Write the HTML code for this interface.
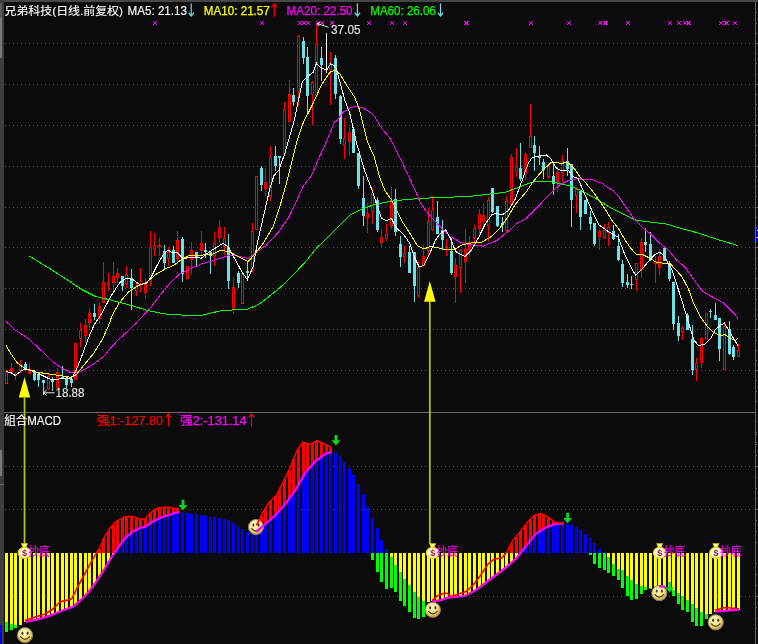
<!DOCTYPE html>
<html lang="zh"><head><meta charset="utf-8"><title>兄弟科技 日线</title>
<style>html,body{margin:0;padding:0;background:#0b0b0b;}body{width:758px;height:644px;overflow:hidden;font-family:"Liberation Sans","Noto Sans CJK SC",sans-serif;}svg text{white-space:pre;}</style>
</head><body>
<svg width="758" height="644" viewBox="0 0 758 644" style="display:block;will-change:transform">
<rect width="758" height="644" fill="#0b0b0b"/>
<g shape-rendering="crispEdges">
<rect x="0" y="0" width="758" height="2" fill="#474747"/>
<rect x="0" y="0" width="4" height="644" fill="#3d3d3d"/>
<rect x="0" y="3" width="2" height="15" fill="#5c5c5c"/>
<rect x="0" y="18" width="2" height="40" fill="#7a7a7a"/>
<rect x="0" y="450" width="2" height="26" fill="#7a7a7a"/>
<rect x="0" y="484" width="4" height="1" fill="#6a6a6a"/>
<rect x="0" y="625" width="2" height="19" fill="#0000ff"/>
<rect x="755" y="2" width="1" height="644" fill="#666"/>
<rect x="4" y="412" width="752" height="1" fill="#6a6a6a"/>
<rect x="756" y="227" width="2" height="15" fill="#0000ee"/>
<rect x="757" y="230" width="1" height="1" fill="#fff"/><rect x="757" y="237" width="1" height="1" fill="#fff"/>
<line x1="5" y1="43.5" x2="755" y2="43.5" stroke="#505050" stroke-width="1" stroke-dasharray="1 3"/>
<rect x="756" y="43" width="2" height="1" fill="#666"/>
<line x1="5" y1="84.5" x2="755" y2="84.5" stroke="#505050" stroke-width="1" stroke-dasharray="1 3"/>
<rect x="756" y="84" width="2" height="1" fill="#666"/>
<line x1="5" y1="125.5" x2="755" y2="125.5" stroke="#505050" stroke-width="1" stroke-dasharray="1 3"/>
<rect x="756" y="125" width="2" height="1" fill="#666"/>
<line x1="5" y1="166.5" x2="755" y2="166.5" stroke="#505050" stroke-width="1" stroke-dasharray="1 3"/>
<rect x="756" y="166" width="2" height="1" fill="#666"/>
<line x1="5" y1="207.5" x2="755" y2="207.5" stroke="#505050" stroke-width="1" stroke-dasharray="1 3"/>
<rect x="756" y="207" width="2" height="1" fill="#666"/>
<line x1="5" y1="247.5" x2="755" y2="247.5" stroke="#505050" stroke-width="1" stroke-dasharray="1 3"/>
<rect x="756" y="247" width="2" height="1" fill="#666"/>
<line x1="5" y1="288.5" x2="755" y2="288.5" stroke="#505050" stroke-width="1" stroke-dasharray="1 3"/>
<rect x="756" y="288" width="2" height="1" fill="#666"/>
<line x1="5" y1="329.5" x2="755" y2="329.5" stroke="#505050" stroke-width="1" stroke-dasharray="1 3"/>
<rect x="756" y="329" width="2" height="1" fill="#666"/>
<line x1="5" y1="370.5" x2="755" y2="370.5" stroke="#505050" stroke-width="1" stroke-dasharray="1 3"/>
<rect x="756" y="370" width="2" height="1" fill="#666"/>
<line x1="5" y1="466.5" x2="755" y2="466.5" stroke="#505050" stroke-width="1" stroke-dasharray="1 3"/>
<rect x="756" y="466" width="2" height="1" fill="#666"/>
<line x1="5" y1="509.5" x2="755" y2="509.5" stroke="#505050" stroke-width="1" stroke-dasharray="1 3"/>
<rect x="756" y="509" width="2" height="1" fill="#666"/>
<line x1="5" y1="596.5" x2="755" y2="596.5" stroke="#505050" stroke-width="1" stroke-dasharray="1 3"/>
<rect x="756" y="596" width="2" height="1" fill="#666"/>
<rect x="756" y="12" width="1" height="1" fill="#666"/>
<rect x="756" y="23" width="1" height="1" fill="#666"/>
<rect x="756" y="33" width="1" height="1" fill="#666"/>
<rect x="756" y="53" width="1" height="1" fill="#666"/>
<rect x="756" y="63" width="1" height="1" fill="#666"/>
<rect x="756" y="74" width="1" height="1" fill="#666"/>
<rect x="756" y="94" width="1" height="1" fill="#666"/>
<rect x="756" y="104" width="1" height="1" fill="#666"/>
<rect x="756" y="115" width="1" height="1" fill="#666"/>
<rect x="756" y="135" width="1" height="1" fill="#666"/>
<rect x="756" y="145" width="1" height="1" fill="#666"/>
<rect x="756" y="155" width="1" height="1" fill="#666"/>
<rect x="756" y="176" width="1" height="1" fill="#666"/>
<rect x="756" y="186" width="1" height="1" fill="#666"/>
<rect x="756" y="196" width="1" height="1" fill="#666"/>
<rect x="756" y="217" width="1" height="1" fill="#666"/>
<rect x="756" y="227" width="1" height="1" fill="#666"/>
<rect x="756" y="237" width="1" height="1" fill="#666"/>
<rect x="756" y="258" width="1" height="1" fill="#666"/>
<rect x="756" y="268" width="1" height="1" fill="#666"/>
<rect x="756" y="278" width="1" height="1" fill="#666"/>
<rect x="756" y="299" width="1" height="1" fill="#666"/>
<rect x="756" y="309" width="1" height="1" fill="#666"/>
<rect x="756" y="319" width="1" height="1" fill="#666"/>
<rect x="756" y="340" width="1" height="1" fill="#666"/>
<rect x="756" y="350" width="1" height="1" fill="#666"/>
<rect x="756" y="360" width="1" height="1" fill="#666"/>
<rect x="756" y="380" width="1" height="1" fill="#666"/>
<rect x="756" y="391" width="1" height="1" fill="#666"/>
<rect x="756" y="401" width="1" height="1" fill="#666"/>
<rect x="756" y="421" width="1" height="1" fill="#666"/>
<rect x="756" y="432" width="1" height="1" fill="#666"/>
<rect x="756" y="442" width="1" height="1" fill="#666"/>
<rect x="756" y="434" width="1" height="1" fill="#666"/>
<rect x="756" y="444" width="1" height="1" fill="#666"/>
<rect x="756" y="455" width="1" height="1" fill="#666"/>
<rect x="756" y="477" width="1" height="1" fill="#666"/>
<rect x="756" y="488" width="1" height="1" fill="#666"/>
<rect x="756" y="498" width="1" height="1" fill="#666"/>
<rect x="756" y="520" width="1" height="1" fill="#666"/>
<rect x="756" y="531" width="1" height="1" fill="#666"/>
<rect x="756" y="542" width="1" height="1" fill="#666"/>
<rect x="756" y="563" width="1" height="1" fill="#666"/>
<rect x="756" y="574" width="1" height="1" fill="#666"/>
<rect x="756" y="585" width="1" height="1" fill="#666"/>
<rect x="756" y="607" width="1" height="1" fill="#666"/>
<rect x="756" y="618" width="1" height="1" fill="#666"/>
<rect x="756" y="628" width="1" height="1" fill="#666"/>
</g>
<g shape-rendering="crispEdges">
<rect x="6" y="370" width="1" height="2" fill="#ff0000"/>
<rect x="5" y="372" width="3" height="12" fill="#ff0000"/>
<rect x="6" y="373" width="1" height="10" fill="#0b0b0b"/>
<rect x="11" y="363" width="1" height="5" fill="#ff0000"/>
<rect x="11" y="372" width="1" height="1" fill="#ff0000"/>
<rect x="10" y="368" width="3" height="4" fill="#ff0000"/>
<rect x="11" y="369" width="1" height="2" fill="#0b0b0b"/>
<rect x="15" y="372" width="1" height="3" fill="#ff0000"/>
<rect x="15" y="376" width="1" height="4" fill="#ff0000"/>
<rect x="14" y="375" width="3" height="1" fill="#ff0000"/>
<rect x="20" y="360" width="1" height="4" fill="#ff0000"/>
<rect x="20" y="371" width="1" height="2" fill="#ff0000"/>
<rect x="19" y="364" width="3" height="7" fill="#ff0000"/>
<rect x="20" y="365" width="1" height="5" fill="#0b0b0b"/>
<rect x="25" y="362" width="1" height="9" fill="#6ce2e8"/>
<rect x="24" y="364" width="3" height="6" fill="#6ce2e8"/>
<rect x="29" y="363" width="1" height="6" fill="#ff0000"/>
<rect x="28" y="369" width="3" height="5" fill="#ff0000"/>
<rect x="29" y="370" width="1" height="3" fill="#0b0b0b"/>
<rect x="34" y="371" width="1" height="10" fill="#6ce2e8"/>
<rect x="33" y="372" width="3" height="8" fill="#6ce2e8"/>
<rect x="38" y="374" width="1" height="13" fill="#6ce2e8"/>
<rect x="37" y="374" width="3" height="6" fill="#6ce2e8"/>
<rect x="43" y="380" width="1" height="15" fill="#6ce2e8"/>
<rect x="42" y="380" width="3" height="3" fill="#6ce2e8"/>
<rect x="48" y="373" width="1" height="3" fill="#ff0000"/>
<rect x="48" y="389" width="1" height="1" fill="#ff0000"/>
<rect x="47" y="376" width="3" height="13" fill="#ff0000"/>
<rect x="48" y="377" width="1" height="11" fill="#0b0b0b"/>
<rect x="52" y="377" width="1" height="14" fill="#6ce2e8"/>
<rect x="51" y="379" width="3" height="3" fill="#6ce2e8"/>
<rect x="57" y="368" width="1" height="4" fill="#ff0000"/>
<rect x="56" y="372" width="3" height="16" fill="#ff0000"/>
<rect x="57" y="373" width="1" height="14" fill="#0b0b0b"/>
<rect x="62" y="366" width="1" height="13" fill="#6ce2e8"/>
<rect x="61" y="377" width="3" height="2" fill="#6ce2e8"/>
<rect x="66" y="377" width="1" height="11" fill="#6ce2e8"/>
<rect x="65" y="378" width="3" height="7" fill="#6ce2e8"/>
<rect x="71" y="378" width="1" height="9" fill="#6ce2e8"/>
<rect x="70" y="379" width="3" height="4" fill="#6ce2e8"/>
<rect x="74" y="343" width="3" height="37" fill="#ff0000"/>
<rect x="75" y="344" width="1" height="35" fill="#0b0b0b"/>
<rect x="80" y="323" width="1" height="7" fill="#ff0000"/>
<rect x="80" y="339" width="1" height="8" fill="#ff0000"/>
<rect x="79" y="330" width="3" height="9" fill="#ff0000"/>
<rect x="80" y="331" width="1" height="7" fill="#0b0b0b"/>
<rect x="85" y="319" width="1" height="6" fill="#ff0000"/>
<rect x="85" y="336" width="1" height="6" fill="#ff0000"/>
<rect x="84" y="325" width="3" height="11" fill="#ff0000"/>
<rect x="85" y="326" width="1" height="9" fill="#0b0b0b"/>
<rect x="89" y="308" width="1" height="5" fill="#ff0000"/>
<rect x="89" y="323" width="1" height="6" fill="#ff0000"/>
<rect x="88" y="313" width="3" height="10" fill="#ff0000"/>
<rect x="89" y="314" width="1" height="8" fill="#0b0b0b"/>
<rect x="94" y="304" width="1" height="16" fill="#6ce2e8"/>
<rect x="93" y="313" width="3" height="4" fill="#6ce2e8"/>
<rect x="99" y="302" width="1" height="4" fill="#ff0000"/>
<rect x="99" y="319" width="1" height="5" fill="#ff0000"/>
<rect x="98" y="306" width="3" height="13" fill="#ff0000"/>
<rect x="99" y="307" width="1" height="11" fill="#0b0b0b"/>
<rect x="103" y="262" width="1" height="20" fill="#ff0000"/>
<rect x="102" y="282" width="3" height="21" fill="#ff0000"/>
<rect x="103" y="283" width="1" height="19" fill="#0b0b0b"/>
<rect x="108" y="273" width="1" height="9" fill="#ff0000"/>
<rect x="108" y="285" width="1" height="6" fill="#ff0000"/>
<rect x="107" y="282" width="3" height="3" fill="#ff0000"/>
<rect x="108" y="283" width="1" height="1" fill="#0b0b0b"/>
<rect x="113" y="262" width="1" height="14" fill="#ff0000"/>
<rect x="113" y="283" width="1" height="8" fill="#ff0000"/>
<rect x="112" y="276" width="3" height="7" fill="#ff0000"/>
<rect x="113" y="277" width="1" height="5" fill="#0b0b0b"/>
<rect x="117" y="268" width="1" height="5" fill="#ff0000"/>
<rect x="117" y="278" width="1" height="5" fill="#ff0000"/>
<rect x="116" y="273" width="3" height="5" fill="#ff0000"/>
<rect x="117" y="274" width="1" height="3" fill="#0b0b0b"/>
<rect x="122" y="276" width="1" height="15" fill="#6ce2e8"/>
<rect x="121" y="276" width="3" height="10" fill="#6ce2e8"/>
<rect x="126" y="266" width="1" height="8" fill="#ff0000"/>
<rect x="126" y="284" width="1" height="4" fill="#ff0000"/>
<rect x="125" y="274" width="3" height="10" fill="#ff0000"/>
<rect x="126" y="275" width="1" height="8" fill="#0b0b0b"/>
<rect x="131" y="269" width="1" height="41" fill="#6ce2e8"/>
<rect x="130" y="278" width="3" height="10" fill="#6ce2e8"/>
<rect x="136" y="283" width="1" height="3" fill="#ff0000"/>
<rect x="136" y="291" width="1" height="5" fill="#ff0000"/>
<rect x="135" y="286" width="3" height="5" fill="#ff0000"/>
<rect x="136" y="287" width="1" height="3" fill="#0b0b0b"/>
<rect x="140" y="268" width="1" height="23" fill="#ff0000"/>
<rect x="139" y="291" width="3" height="1" fill="#ff0000"/>
<rect x="145" y="278" width="1" height="6" fill="#ff0000"/>
<rect x="145" y="293" width="1" height="6" fill="#ff0000"/>
<rect x="144" y="284" width="3" height="9" fill="#ff0000"/>
<rect x="145" y="285" width="1" height="7" fill="#0b0b0b"/>
<rect x="150" y="231" width="1" height="16" fill="#ff0000"/>
<rect x="150" y="282" width="1" height="4" fill="#ff0000"/>
<rect x="149" y="247" width="3" height="35" fill="#ff0000"/>
<rect x="150" y="248" width="1" height="33" fill="#0b0b0b"/>
<rect x="154" y="233" width="1" height="13" fill="#ff0000"/>
<rect x="154" y="250" width="1" height="6" fill="#ff0000"/>
<rect x="153" y="246" width="3" height="4" fill="#ff0000"/>
<rect x="154" y="247" width="1" height="2" fill="#0b0b0b"/>
<rect x="159" y="238" width="1" height="7" fill="#ff0000"/>
<rect x="159" y="247" width="1" height="9" fill="#ff0000"/>
<rect x="158" y="245" width="3" height="2" fill="#ff0000"/>
<rect x="164" y="245" width="1" height="24" fill="#6ce2e8"/>
<rect x="163" y="251" width="3" height="12" fill="#6ce2e8"/>
<rect x="168" y="247" width="1" height="5" fill="#ff0000"/>
<rect x="168" y="259" width="1" height="7" fill="#ff0000"/>
<rect x="167" y="252" width="3" height="7" fill="#ff0000"/>
<rect x="168" y="253" width="1" height="5" fill="#0b0b0b"/>
<rect x="173" y="246" width="1" height="17" fill="#6ce2e8"/>
<rect x="172" y="250" width="3" height="13" fill="#6ce2e8"/>
<rect x="177" y="231" width="1" height="9" fill="#ff0000"/>
<rect x="177" y="259" width="1" height="6" fill="#ff0000"/>
<rect x="176" y="240" width="3" height="19" fill="#ff0000"/>
<rect x="177" y="241" width="1" height="17" fill="#0b0b0b"/>
<rect x="182" y="237" width="1" height="45" fill="#6ce2e8"/>
<rect x="181" y="239" width="3" height="35" fill="#6ce2e8"/>
<rect x="187" y="279" width="1" height="1" fill="#ff0000"/>
<rect x="186" y="266" width="3" height="13" fill="#ff0000"/>
<rect x="187" y="267" width="1" height="11" fill="#0b0b0b"/>
<rect x="191" y="242" width="1" height="8" fill="#ff0000"/>
<rect x="191" y="260" width="1" height="15" fill="#ff0000"/>
<rect x="190" y="250" width="3" height="10" fill="#ff0000"/>
<rect x="191" y="251" width="1" height="8" fill="#0b0b0b"/>
<rect x="196" y="252" width="1" height="15" fill="#6ce2e8"/>
<rect x="195" y="252" width="3" height="6" fill="#6ce2e8"/>
<rect x="201" y="231" width="1" height="12" fill="#ff0000"/>
<rect x="201" y="251" width="1" height="5" fill="#ff0000"/>
<rect x="200" y="243" width="3" height="8" fill="#ff0000"/>
<rect x="201" y="244" width="1" height="6" fill="#0b0b0b"/>
<rect x="205" y="243" width="1" height="15" fill="#6ce2e8"/>
<rect x="204" y="250" width="3" height="2" fill="#6ce2e8"/>
<rect x="210" y="251" width="1" height="23" fill="#6ce2e8"/>
<rect x="209" y="252" width="3" height="4" fill="#6ce2e8"/>
<rect x="214" y="232" width="1" height="11" fill="#ff0000"/>
<rect x="214" y="256" width="1" height="10" fill="#ff0000"/>
<rect x="213" y="243" width="3" height="13" fill="#ff0000"/>
<rect x="214" y="244" width="1" height="11" fill="#0b0b0b"/>
<rect x="219" y="220" width="1" height="7" fill="#ff0000"/>
<rect x="219" y="238" width="1" height="5" fill="#ff0000"/>
<rect x="218" y="227" width="3" height="11" fill="#ff0000"/>
<rect x="219" y="228" width="1" height="9" fill="#0b0b0b"/>
<rect x="224" y="227" width="1" height="11" fill="#ff0000"/>
<rect x="224" y="247" width="1" height="8" fill="#ff0000"/>
<rect x="223" y="238" width="3" height="9" fill="#ff0000"/>
<rect x="224" y="239" width="1" height="7" fill="#0b0b0b"/>
<rect x="228" y="234" width="1" height="55" fill="#6ce2e8"/>
<rect x="227" y="247" width="3" height="34" fill="#6ce2e8"/>
<rect x="233" y="277" width="1" height="10" fill="#ff0000"/>
<rect x="233" y="310" width="1" height="4" fill="#ff0000"/>
<rect x="232" y="287" width="3" height="23" fill="#ff0000"/>
<rect x="233" y="288" width="1" height="21" fill="#0b0b0b"/>
<rect x="238" y="271" width="1" height="17" fill="#6ce2e8"/>
<rect x="237" y="273" width="3" height="10" fill="#6ce2e8"/>
<rect x="241" y="274" width="3" height="30" fill="#ff0000"/>
<rect x="242" y="275" width="1" height="28" fill="#0b0b0b"/>
<rect x="247" y="262" width="1" height="16" fill="#6ce2e8"/>
<rect x="246" y="271" width="3" height="2" fill="#6ce2e8"/>
<rect x="252" y="223" width="1" height="8" fill="#ff0000"/>
<rect x="252" y="270" width="1" height="3" fill="#ff0000"/>
<rect x="251" y="231" width="3" height="39" fill="#ff0000"/>
<rect x="252" y="232" width="1" height="37" fill="#0b0b0b"/>
<rect x="255" y="176" width="3" height="54" fill="#ff0000"/>
<rect x="256" y="177" width="1" height="52" fill="#0b0b0b"/>
<rect x="261" y="166" width="1" height="25" fill="#6ce2e8"/>
<rect x="260" y="168" width="3" height="17" fill="#6ce2e8"/>
<rect x="265" y="168" width="1" height="14" fill="#ff0000"/>
<rect x="265" y="189" width="1" height="7" fill="#ff0000"/>
<rect x="264" y="182" width="3" height="7" fill="#ff0000"/>
<rect x="265" y="183" width="1" height="5" fill="#0b0b0b"/>
<rect x="270" y="146" width="1" height="11" fill="#ff0000"/>
<rect x="270" y="197" width="1" height="4" fill="#ff0000"/>
<rect x="269" y="157" width="3" height="40" fill="#ff0000"/>
<rect x="270" y="158" width="1" height="38" fill="#0b0b0b"/>
<rect x="275" y="146" width="1" height="25" fill="#6ce2e8"/>
<rect x="274" y="156" width="3" height="10" fill="#6ce2e8"/>
<rect x="279" y="156" width="1" height="28" fill="#6ce2e8"/>
<rect x="278" y="156" width="3" height="2" fill="#6ce2e8"/>
<rect x="284" y="102" width="1" height="7" fill="#ff0000"/>
<rect x="284" y="154" width="1" height="1" fill="#ff0000"/>
<rect x="283" y="109" width="3" height="45" fill="#ff0000"/>
<rect x="284" y="110" width="1" height="43" fill="#0b0b0b"/>
<rect x="289" y="80" width="1" height="14" fill="#ff0000"/>
<rect x="288" y="94" width="3" height="28" fill="#ff0000"/>
<rect x="289" y="95" width="1" height="26" fill="#0b0b0b"/>
<rect x="293" y="88" width="1" height="18" fill="#6ce2e8"/>
<rect x="292" y="95" width="3" height="7" fill="#6ce2e8"/>
<rect x="298" y="35" width="1" height="1" fill="#ff0000"/>
<rect x="298" y="92" width="1" height="14" fill="#ff0000"/>
<rect x="297" y="36" width="3" height="56" fill="#ff0000"/>
<rect x="298" y="37" width="1" height="54" fill="#0b0b0b"/>
<rect x="303" y="37" width="1" height="27" fill="#6ce2e8"/>
<rect x="302" y="41" width="3" height="17" fill="#6ce2e8"/>
<rect x="307" y="47" width="1" height="67" fill="#6ce2e8"/>
<rect x="306" y="57" width="3" height="39" fill="#6ce2e8"/>
<rect x="312" y="81" width="1" height="1" fill="#ff0000"/>
<rect x="312" y="95" width="1" height="30" fill="#ff0000"/>
<rect x="311" y="82" width="3" height="13" fill="#ff0000"/>
<rect x="312" y="83" width="1" height="11" fill="#0b0b0b"/>
<rect x="316" y="23" width="1" height="21" fill="#ff0000"/>
<rect x="316" y="96" width="1" height="1" fill="#ff0000"/>
<rect x="315" y="44" width="3" height="52" fill="#ff0000"/>
<rect x="316" y="45" width="1" height="50" fill="#0b0b0b"/>
<rect x="321" y="47" width="1" height="34" fill="#6ce2e8"/>
<rect x="320" y="58" width="3" height="7" fill="#6ce2e8"/>
<rect x="326" y="33" width="1" height="40" fill="#fff"/>
<rect x="325" y="69" width="3" height="1" fill="#fff"/>
<rect x="330" y="52" width="1" height="11" fill="#ff0000"/>
<rect x="330" y="70" width="1" height="35" fill="#ff0000"/>
<rect x="329" y="63" width="3" height="7" fill="#ff0000"/>
<rect x="330" y="64" width="1" height="5" fill="#0b0b0b"/>
<rect x="335" y="55" width="1" height="44" fill="#6ce2e8"/>
<rect x="334" y="58" width="3" height="36" fill="#6ce2e8"/>
<rect x="340" y="95" width="1" height="49" fill="#6ce2e8"/>
<rect x="339" y="96" width="3" height="43" fill="#6ce2e8"/>
<rect x="344" y="118" width="1" height="20" fill="#ff0000"/>
<rect x="344" y="146" width="1" height="13" fill="#ff0000"/>
<rect x="343" y="138" width="3" height="8" fill="#ff0000"/>
<rect x="344" y="139" width="1" height="6" fill="#0b0b0b"/>
<rect x="349" y="127" width="1" height="5" fill="#ff0000"/>
<rect x="349" y="142" width="1" height="14" fill="#ff0000"/>
<rect x="348" y="132" width="3" height="10" fill="#ff0000"/>
<rect x="349" y="133" width="1" height="8" fill="#0b0b0b"/>
<rect x="353" y="129" width="1" height="24" fill="#6ce2e8"/>
<rect x="352" y="129" width="3" height="24" fill="#6ce2e8"/>
<rect x="358" y="153" width="1" height="36" fill="#6ce2e8"/>
<rect x="357" y="153" width="3" height="33" fill="#6ce2e8"/>
<rect x="363" y="176" width="1" height="50" fill="#6ce2e8"/>
<rect x="362" y="198" width="3" height="18" fill="#6ce2e8"/>
<rect x="367" y="203" width="1" height="10" fill="#ff0000"/>
<rect x="367" y="218" width="1" height="15" fill="#ff0000"/>
<rect x="366" y="213" width="3" height="5" fill="#ff0000"/>
<rect x="367" y="214" width="1" height="3" fill="#0b0b0b"/>
<rect x="372" y="188" width="1" height="5" fill="#ff0000"/>
<rect x="372" y="212" width="1" height="12" fill="#ff0000"/>
<rect x="371" y="193" width="3" height="19" fill="#ff0000"/>
<rect x="372" y="194" width="1" height="17" fill="#0b0b0b"/>
<rect x="377" y="197" width="1" height="35" fill="#6ce2e8"/>
<rect x="376" y="200" width="3" height="30" fill="#6ce2e8"/>
<rect x="381" y="229" width="1" height="8" fill="#ff0000"/>
<rect x="381" y="243" width="1" height="4" fill="#ff0000"/>
<rect x="380" y="237" width="3" height="6" fill="#ff0000"/>
<rect x="381" y="238" width="1" height="4" fill="#0b0b0b"/>
<rect x="386" y="224" width="1" height="10" fill="#ff0000"/>
<rect x="386" y="239" width="1" height="2" fill="#ff0000"/>
<rect x="385" y="234" width="3" height="5" fill="#ff0000"/>
<rect x="386" y="235" width="1" height="3" fill="#0b0b0b"/>
<rect x="391" y="187" width="1" height="13" fill="#ff0000"/>
<rect x="391" y="226" width="1" height="3" fill="#ff0000"/>
<rect x="390" y="200" width="3" height="26" fill="#ff0000"/>
<rect x="391" y="201" width="1" height="24" fill="#0b0b0b"/>
<rect x="395" y="189" width="1" height="47" fill="#6ce2e8"/>
<rect x="394" y="199" width="3" height="33" fill="#6ce2e8"/>
<rect x="400" y="236" width="1" height="31" fill="#6ce2e8"/>
<rect x="399" y="244" width="3" height="13" fill="#6ce2e8"/>
<rect x="404" y="246" width="1" height="7" fill="#ff0000"/>
<rect x="404" y="257" width="1" height="6" fill="#ff0000"/>
<rect x="403" y="253" width="3" height="4" fill="#ff0000"/>
<rect x="404" y="254" width="1" height="2" fill="#0b0b0b"/>
<rect x="409" y="246" width="1" height="27" fill="#6ce2e8"/>
<rect x="408" y="252" width="3" height="21" fill="#6ce2e8"/>
<rect x="414" y="252" width="1" height="50" fill="#6ce2e8"/>
<rect x="413" y="252" width="3" height="34" fill="#6ce2e8"/>
<rect x="418" y="261" width="1" height="6" fill="#ff0000"/>
<rect x="418" y="296" width="1" height="2" fill="#ff0000"/>
<rect x="417" y="267" width="3" height="29" fill="#ff0000"/>
<rect x="418" y="268" width="1" height="27" fill="#0b0b0b"/>
<rect x="423" y="245" width="1" height="11" fill="#ff0000"/>
<rect x="422" y="256" width="3" height="10" fill="#ff0000"/>
<rect x="423" y="257" width="1" height="8" fill="#0b0b0b"/>
<rect x="428" y="208" width="1" height="13" fill="#ff0000"/>
<rect x="428" y="251" width="1" height="4" fill="#ff0000"/>
<rect x="427" y="221" width="3" height="30" fill="#ff0000"/>
<rect x="428" y="222" width="1" height="28" fill="#0b0b0b"/>
<rect x="432" y="196" width="1" height="14" fill="#ff0000"/>
<rect x="432" y="230" width="1" height="1" fill="#ff0000"/>
<rect x="431" y="210" width="3" height="20" fill="#ff0000"/>
<rect x="432" y="211" width="1" height="18" fill="#0b0b0b"/>
<rect x="437" y="201" width="1" height="33" fill="#6ce2e8"/>
<rect x="436" y="217" width="3" height="17" fill="#6ce2e8"/>
<rect x="442" y="220" width="1" height="30" fill="#6ce2e8"/>
<rect x="441" y="230" width="3" height="10" fill="#6ce2e8"/>
<rect x="446" y="239" width="1" height="7" fill="#ff0000"/>
<rect x="446" y="248" width="1" height="8" fill="#ff0000"/>
<rect x="445" y="246" width="3" height="2" fill="#ff0000"/>
<rect x="451" y="238" width="1" height="37" fill="#6ce2e8"/>
<rect x="450" y="251" width="3" height="22" fill="#6ce2e8"/>
<rect x="455" y="258" width="1" height="7" fill="#ff0000"/>
<rect x="455" y="277" width="1" height="26" fill="#ff0000"/>
<rect x="454" y="265" width="3" height="12" fill="#ff0000"/>
<rect x="455" y="266" width="1" height="10" fill="#0b0b0b"/>
<rect x="460" y="249" width="1" height="1" fill="#ff0000"/>
<rect x="460" y="268" width="1" height="25" fill="#ff0000"/>
<rect x="459" y="250" width="3" height="18" fill="#ff0000"/>
<rect x="460" y="251" width="1" height="16" fill="#0b0b0b"/>
<rect x="465" y="229" width="1" height="20" fill="#ff0000"/>
<rect x="465" y="262" width="1" height="21" fill="#ff0000"/>
<rect x="464" y="249" width="3" height="13" fill="#ff0000"/>
<rect x="465" y="250" width="1" height="11" fill="#0b0b0b"/>
<rect x="469" y="236" width="1" height="6" fill="#ff0000"/>
<rect x="469" y="250" width="1" height="7" fill="#ff0000"/>
<rect x="468" y="242" width="3" height="8" fill="#ff0000"/>
<rect x="469" y="243" width="1" height="6" fill="#0b0b0b"/>
<rect x="474" y="225" width="1" height="3" fill="#ff0000"/>
<rect x="474" y="238" width="1" height="7" fill="#ff0000"/>
<rect x="473" y="228" width="3" height="10" fill="#ff0000"/>
<rect x="474" y="229" width="1" height="8" fill="#0b0b0b"/>
<rect x="479" y="209" width="1" height="5" fill="#ff0000"/>
<rect x="479" y="229" width="1" height="6" fill="#ff0000"/>
<rect x="478" y="214" width="3" height="15" fill="#ff0000"/>
<rect x="479" y="215" width="1" height="13" fill="#0b0b0b"/>
<rect x="483" y="203" width="1" height="12" fill="#ff0000"/>
<rect x="483" y="222" width="1" height="4" fill="#ff0000"/>
<rect x="482" y="215" width="3" height="7" fill="#ff0000"/>
<rect x="483" y="216" width="1" height="5" fill="#0b0b0b"/>
<rect x="488" y="197" width="1" height="3" fill="#ff0000"/>
<rect x="488" y="226" width="1" height="15" fill="#ff0000"/>
<rect x="487" y="200" width="3" height="26" fill="#ff0000"/>
<rect x="488" y="201" width="1" height="24" fill="#0b0b0b"/>
<rect x="492" y="188" width="1" height="25" fill="#6ce2e8"/>
<rect x="491" y="188" width="3" height="24" fill="#6ce2e8"/>
<rect x="497" y="206" width="1" height="21" fill="#6ce2e8"/>
<rect x="496" y="206" width="3" height="20" fill="#6ce2e8"/>
<rect x="502" y="217" width="1" height="15" fill="#6ce2e8"/>
<rect x="501" y="223" width="3" height="2" fill="#6ce2e8"/>
<rect x="506" y="196" width="1" height="5" fill="#ff0000"/>
<rect x="506" y="231" width="1" height="1" fill="#ff0000"/>
<rect x="505" y="201" width="3" height="30" fill="#ff0000"/>
<rect x="506" y="202" width="1" height="28" fill="#0b0b0b"/>
<rect x="511" y="154" width="1" height="3" fill="#ff0000"/>
<rect x="511" y="205" width="1" height="1" fill="#ff0000"/>
<rect x="510" y="157" width="3" height="48" fill="#ff0000"/>
<rect x="511" y="158" width="1" height="46" fill="#0b0b0b"/>
<rect x="516" y="148" width="1" height="18" fill="#ff0000"/>
<rect x="516" y="172" width="1" height="5" fill="#ff0000"/>
<rect x="515" y="166" width="3" height="6" fill="#ff0000"/>
<rect x="516" y="167" width="1" height="4" fill="#0b0b0b"/>
<rect x="520" y="143" width="1" height="38" fill="#6ce2e8"/>
<rect x="519" y="168" width="3" height="11" fill="#6ce2e8"/>
<rect x="525" y="152" width="1" height="2" fill="#ff0000"/>
<rect x="525" y="174" width="1" height="6" fill="#ff0000"/>
<rect x="524" y="154" width="3" height="20" fill="#ff0000"/>
<rect x="525" y="155" width="1" height="18" fill="#0b0b0b"/>
<rect x="530" y="104" width="1" height="32" fill="#ff0000"/>
<rect x="529" y="136" width="3" height="12" fill="#ff0000"/>
<rect x="530" y="137" width="1" height="10" fill="#0b0b0b"/>
<rect x="534" y="136" width="1" height="35" fill="#6ce2e8"/>
<rect x="533" y="145" width="3" height="8" fill="#6ce2e8"/>
<rect x="539" y="146" width="1" height="19" fill="#6ce2e8"/>
<rect x="538" y="156" width="3" height="2" fill="#6ce2e8"/>
<rect x="543" y="159" width="1" height="20" fill="#6ce2e8"/>
<rect x="542" y="162" width="3" height="8" fill="#6ce2e8"/>
<rect x="548" y="164" width="1" height="2" fill="#ff0000"/>
<rect x="548" y="177" width="1" height="2" fill="#ff0000"/>
<rect x="547" y="166" width="3" height="11" fill="#ff0000"/>
<rect x="548" y="167" width="1" height="9" fill="#0b0b0b"/>
<rect x="553" y="164" width="1" height="31" fill="#6ce2e8"/>
<rect x="552" y="176" width="3" height="8" fill="#6ce2e8"/>
<rect x="557" y="167" width="1" height="5" fill="#ff0000"/>
<rect x="557" y="183" width="1" height="9" fill="#ff0000"/>
<rect x="556" y="172" width="3" height="11" fill="#ff0000"/>
<rect x="557" y="173" width="1" height="9" fill="#0b0b0b"/>
<rect x="562" y="155" width="1" height="6" fill="#ff0000"/>
<rect x="562" y="173" width="1" height="9" fill="#ff0000"/>
<rect x="561" y="161" width="3" height="12" fill="#ff0000"/>
<rect x="562" y="162" width="1" height="10" fill="#0b0b0b"/>
<rect x="567" y="148" width="1" height="28" fill="#6ce2e8"/>
<rect x="566" y="161" width="3" height="8" fill="#6ce2e8"/>
<rect x="571" y="164" width="1" height="63" fill="#6ce2e8"/>
<rect x="570" y="164" width="3" height="36" fill="#6ce2e8"/>
<rect x="576" y="187" width="1" height="2" fill="#ff0000"/>
<rect x="576" y="196" width="1" height="17" fill="#ff0000"/>
<rect x="575" y="189" width="3" height="7" fill="#ff0000"/>
<rect x="576" y="190" width="1" height="5" fill="#0b0b0b"/>
<rect x="580" y="191" width="1" height="39" fill="#6ce2e8"/>
<rect x="579" y="191" width="3" height="26" fill="#6ce2e8"/>
<rect x="585" y="200" width="1" height="14" fill="#6ce2e8"/>
<rect x="584" y="200" width="3" height="14" fill="#6ce2e8"/>
<rect x="590" y="211" width="1" height="19" fill="#6ce2e8"/>
<rect x="589" y="217" width="3" height="7" fill="#6ce2e8"/>
<rect x="594" y="223" width="1" height="23" fill="#6ce2e8"/>
<rect x="593" y="223" width="3" height="21" fill="#6ce2e8"/>
<rect x="599" y="230" width="1" height="1" fill="#ff0000"/>
<rect x="599" y="237" width="1" height="13" fill="#ff0000"/>
<rect x="598" y="231" width="3" height="6" fill="#ff0000"/>
<rect x="599" y="232" width="1" height="4" fill="#0b0b0b"/>
<rect x="604" y="224" width="1" height="6" fill="#ff0000"/>
<rect x="604" y="238" width="1" height="1" fill="#ff0000"/>
<rect x="603" y="230" width="3" height="8" fill="#ff0000"/>
<rect x="604" y="231" width="1" height="6" fill="#0b0b0b"/>
<rect x="608" y="222" width="1" height="5" fill="#ff0000"/>
<rect x="608" y="233" width="1" height="13" fill="#ff0000"/>
<rect x="607" y="227" width="3" height="6" fill="#ff0000"/>
<rect x="608" y="228" width="1" height="4" fill="#0b0b0b"/>
<rect x="613" y="225" width="1" height="15" fill="#6ce2e8"/>
<rect x="612" y="231" width="3" height="8" fill="#6ce2e8"/>
<rect x="618" y="234" width="1" height="27" fill="#6ce2e8"/>
<rect x="617" y="246" width="3" height="14" fill="#6ce2e8"/>
<rect x="622" y="260" width="1" height="27" fill="#6ce2e8"/>
<rect x="621" y="264" width="3" height="19" fill="#6ce2e8"/>
<rect x="627" y="274" width="1" height="14" fill="#6ce2e8"/>
<rect x="626" y="282" width="3" height="3" fill="#6ce2e8"/>
<rect x="631" y="276" width="1" height="13" fill="#6ce2e8"/>
<rect x="630" y="284" width="3" height="1" fill="#6ce2e8"/>
<rect x="636" y="280" width="1" height="11" fill="#ff0000"/>
<rect x="635" y="263" width="3" height="17" fill="#ff0000"/>
<rect x="636" y="264" width="1" height="15" fill="#0b0b0b"/>
<rect x="641" y="238" width="1" height="4" fill="#ff0000"/>
<rect x="641" y="270" width="1" height="8" fill="#ff0000"/>
<rect x="640" y="242" width="3" height="28" fill="#ff0000"/>
<rect x="641" y="243" width="1" height="26" fill="#0b0b0b"/>
<rect x="645" y="228" width="1" height="24" fill="#6ce2e8"/>
<rect x="644" y="242" width="3" height="3" fill="#6ce2e8"/>
<rect x="650" y="232" width="1" height="29" fill="#6ce2e8"/>
<rect x="649" y="244" width="3" height="16" fill="#6ce2e8"/>
<rect x="655" y="256" width="1" height="5" fill="#ff0000"/>
<rect x="655" y="264" width="1" height="19" fill="#ff0000"/>
<rect x="654" y="261" width="3" height="3" fill="#ff0000"/>
<rect x="655" y="262" width="1" height="1" fill="#0b0b0b"/>
<rect x="659" y="249" width="1" height="7" fill="#ff0000"/>
<rect x="659" y="268" width="1" height="7" fill="#ff0000"/>
<rect x="658" y="256" width="3" height="12" fill="#ff0000"/>
<rect x="659" y="257" width="1" height="10" fill="#0b0b0b"/>
<rect x="664" y="248" width="1" height="13" fill="#6ce2e8"/>
<rect x="663" y="248" width="3" height="13" fill="#6ce2e8"/>
<rect x="669" y="261" width="1" height="20" fill="#6ce2e8"/>
<rect x="668" y="265" width="3" height="14" fill="#6ce2e8"/>
<rect x="673" y="282" width="1" height="48" fill="#6ce2e8"/>
<rect x="672" y="282" width="3" height="42" fill="#6ce2e8"/>
<rect x="678" y="316" width="1" height="25" fill="#6ce2e8"/>
<rect x="677" y="323" width="3" height="13" fill="#6ce2e8"/>
<rect x="682" y="326" width="1" height="2" fill="#ff0000"/>
<rect x="682" y="332" width="1" height="8" fill="#ff0000"/>
<rect x="681" y="328" width="3" height="4" fill="#ff0000"/>
<rect x="682" y="329" width="1" height="2" fill="#0b0b0b"/>
<rect x="687" y="313" width="1" height="17" fill="#6ce2e8"/>
<rect x="686" y="315" width="3" height="15" fill="#6ce2e8"/>
<rect x="692" y="325" width="1" height="50" fill="#6ce2e8"/>
<rect x="691" y="339" width="3" height="31" fill="#6ce2e8"/>
<rect x="696" y="358" width="1" height="5" fill="#ff0000"/>
<rect x="696" y="370" width="1" height="11" fill="#ff0000"/>
<rect x="695" y="363" width="3" height="7" fill="#ff0000"/>
<rect x="696" y="364" width="1" height="5" fill="#0b0b0b"/>
<rect x="701" y="363" width="1" height="5" fill="#ff0000"/>
<rect x="700" y="338" width="3" height="25" fill="#ff0000"/>
<rect x="701" y="339" width="1" height="23" fill="#0b0b0b"/>
<rect x="706" y="339" width="1" height="1" fill="#ff0000"/>
<rect x="705" y="313" width="3" height="26" fill="#ff0000"/>
<rect x="706" y="314" width="1" height="24" fill="#0b0b0b"/>
<rect x="710" y="309" width="1" height="9" fill="#6ce2e8"/>
<rect x="709" y="311" width="3" height="1" fill="#6ce2e8"/>
<rect x="715" y="303" width="1" height="17" fill="#6ce2e8"/>
<rect x="714" y="315" width="3" height="5" fill="#6ce2e8"/>
<rect x="719" y="318" width="1" height="43" fill="#6ce2e8"/>
<rect x="718" y="318" width="3" height="31" fill="#6ce2e8"/>
<rect x="724" y="323" width="1" height="3" fill="#ff0000"/>
<rect x="723" y="326" width="3" height="44" fill="#ff0000"/>
<rect x="724" y="327" width="1" height="42" fill="#0b0b0b"/>
<rect x="729" y="321" width="1" height="34" fill="#6ce2e8"/>
<rect x="728" y="329" width="3" height="25" fill="#6ce2e8"/>
<rect x="733" y="345" width="1" height="15" fill="#6ce2e8"/>
<rect x="732" y="347" width="3" height="10" fill="#6ce2e8"/>
<rect x="738" y="344" width="1" height="6" fill="#ff0000"/>
<rect x="737" y="350" width="3" height="7" fill="#ff0000"/>
<rect x="738" y="351" width="1" height="5" fill="#0b0b0b"/>
</g>
<polyline points="29.6,256.3 50.1,268.8 67.7,280.1 82.7,290.1 95.3,296.4 109.9,299.8 131.6,305.6 148.2,310.6 164.8,313.9 189.7,315.6 200.0,315.7 210.0,313.2 221.6,310.7 233.2,309.9 248.2,309.0 259.8,303.6 271.5,294.6 281.4,286.3 294.7,273.3 306.4,260.8 316.4,248.2 326.0,239.0 340.0,224.9 350.0,214.9 359.9,209.9 373.2,205.0 389.9,201.3 406.5,199.5 423.1,198.3 439.7,197.5 466.0,196.6 476.6,195.7 493.2,193.6 504.9,192.4 516.5,188.2 526.5,184.1 534.8,181.6 546.4,181.1 554.7,182.4 570.0,185.8 583.3,191.6 596.6,199.1 609.9,207.4 623.2,214.1 634.8,219.9 646.5,221.6 666.4,224.0 683.0,229.0 696.0,232.4 718.0,239.6 738.0,245.5" fill="none" stroke="#00ff00" stroke-width="1" shape-rendering="crispEdges"/>
<polyline points="6.0,321.4 14.9,329.8 27.9,338.2 41.0,350.3 52.2,361.5 61.5,368.0 70.8,372.7 76.4,372.7 82.0,370.8 93.2,364.3 104.3,355.9 111.8,346.6 120.0,338.2 135.4,324.0 142.4,316.4 151.5,306.4 161.5,293.1 171.4,281.5 179.8,274.0 189.7,269.0 201.4,264.0 213.3,260.6 226.6,256.0 236.6,255.7 248.2,258.5 256.5,252.3 266.5,244.9 278.1,232.4 288.1,218.3 294.0,206.4 303.1,186.4 311.4,175.6 318.1,159.8 326.4,141.6 334.7,121.6 336.4,121.4 343.1,112.2 351.4,107.3 356.4,106.1 363.0,108.1 369.7,112.2 374.1,115.8 381.6,128.3 389.9,138.2 399.8,157.3 408.2,175.6 416.5,193.1 419.8,201.6 426.4,211.6 434.7,220.8 443.1,229.9 449.7,235.7 456.4,239.9 460.0,242.3 470.0,244.7 483.3,246.1 496.6,240.6 508.2,231.4 518.2,222.3 526.5,218.2 536.5,208.2 549.8,194.0 559.7,184.9 568.0,180.8 578.0,178.6 586.0,179.9 593.3,180.0 601.6,183.3 613.2,190.8 619.9,198.3 626.5,208.3 634.8,219.9 643.1,228.2 649.8,233.2 659.8,243.2 668.1,249.8 676.4,259.8 685.2,267.5 693.5,279.1 701.0,289.9 708.5,294.9 716.8,299.4 723.4,302.9 730.1,309.8 735.1,314.8 738.1,318.5" fill="none" stroke="#ff00ff" stroke-width="1" shape-rendering="crispEdges"/>
<polyline points="6.0,345.6 11.2,354.0 16.8,362.4 24.2,368.0 33.5,371.7 46.6,373.6 59.6,375.5 70.8,377.3 76.4,374.5 83.8,365.2 93.2,354.0 102.5,339.1 109.9,322.4 111.6,316.4 119.1,303.1 128.2,292.3 138.2,285.6 146.5,282.3 156.5,274.0 166.5,268.2 173.1,265.7 179.8,260.7 189.7,255.2 196.4,255.2 206.4,254.9 213.3,254.0 219.9,250.7 228.3,251.2 236.6,255.7 248.2,261.5 254.9,254.0 263.2,243.2 273.1,226.6 279.9,206.4 286.5,183.1 293.2,156.5 297.3,139.9 303.1,123.3 304.0,121.4 313.2,103.1 321.5,84.8 329.8,72.3 334.8,70.2 339.8,74.0 346.4,84.8 354.7,97.3 358.9,108.1 361.6,118.3 367.4,141.6 374.1,156.5 379.9,178.1 384.9,190.6 391.5,200.0 396.5,209.9 402.3,221.6 409.8,233.2 417.3,245.7 423.9,249.0 430.6,246.5 436.4,247.3 443.1,249.0 449.7,249.0 455.5,249.0 461.3,245.2 470.0,243.1 481.6,242.3 491.6,236.4 499.9,228.1 508.2,216.5 514.9,204.9 526.5,191.6 533.1,181.6 543.1,169.9 550.6,163.0 554.7,162.0 561.4,163.6 567.2,162.0 574.7,169.1 579.7,176.6 583.3,180.0 591.6,190.0 598.3,199.1 605.7,209.9 611.6,219.9 618.2,228.2 624.9,239.8 630.7,248.2 636.5,254.5 643.1,254.8 649.8,258.1 656.4,262.3 663.1,263.1 669.7,263.1 675.2,269.1 681.9,276.6 688.5,289.1 693.5,303.2 700.2,316.5 706.8,325.6 713.4,332.3 720.1,335.3 725.1,334.8 731.7,338.9 735.1,340.6 738.1,338.1" fill="none" stroke="#ffff00" stroke-width="1" shape-rendering="crispEdges"/>
<polyline points="6.0,371.7 11.2,372.7 15.3,375.5 20.1,371.7 24.6,368.9 29.4,369.9 34.1,370.8 38.8,373.6 43.4,376.0 48.1,378.3 52.7,380.1 57.4,379.2 62.0,378.6 66.7,377.9 71.4,378.3 75.5,371.7 80.5,359.6 85.3,346.6 89.8,334.5 94.5,324.2 100.0,316.4 110.8,296.4 119.9,282.3 126.6,278.2 133.2,279.8 139.9,284.8 146.5,283.1 151.5,276.5 156.5,266.5 163.1,254.9 168.1,249.9 172.3,252.9 177.3,252.9 183.1,258.5 191.4,257.4 196.4,257.4 201.4,258.2 206.4,254.0 210.0,251.5 216.6,247.3 223.3,243.2 228.3,247.3 234.9,259.0 241.6,271.4 247.4,279.8 253.2,266.5 257.3,243.2 266.5,203.3 269.9,188.1 274.0,175.6 279.0,169.8 284.9,153.2 291.5,129.9 294.0,121.4 298.2,101.4 302.4,81.5 307.3,76.5 313.2,72.3 316.5,63.2 321.5,68.2 326.5,69.9 330.6,64.0 335.6,66.5 339.8,81.5 344.7,99.8 349.7,113.1 356.6,143.2 364.9,171.5 373.2,193.1 375.7,201.6 381.6,218.3 386.5,220.8 391.5,218.3 395.7,227.4 403.2,234.0 409.8,243.2 414.8,258.2 419.0,266.5 423.9,265.6 429.8,253.2 435.6,239.9 440.6,233.2 445.6,229.9 450.5,238.2 455.5,251.5 461.3,254.8 465.0,256.4 471.6,249.7 478.3,238.1 484.9,224.8 491.6,214.8 495.7,213.2 502.4,214.8 508.2,210.7 514.9,199.9 522.3,179.9 528.2,163.3 532.3,157.5 539.8,155.8 546.4,155.0 550.6,158.3 556.4,168.3 561.4,170.8 568.0,169.9 573.0,176.6 578.0,178.3 585.0,195.0 591.6,209.9 599.1,224.9 608.2,231.5 618.2,237.3 624.9,254.8 630.7,266.4 635.7,275.6 641.5,269.8 649.8,259.8 654.8,254.8 659.8,252.3 664.7,256.5 671.9,269.9 678.5,289.9 685.2,311.5 690.2,328.1 694.3,340.6 698.5,345.6 705.1,343.9 711.0,338.1 715.1,329.8 720.1,325.6 724.3,323.1 728.4,329.8 733.4,338.1 738.4,346.4" fill="none" stroke="#ffffff" stroke-width="1" shape-rendering="crispEdges"/>
<g fill="#ff00ff" shape-rendering="crispEdges">
<rect x="153" y="21" width="1" height="1"/>
<rect x="156" y="21" width="1" height="1"/>
<rect x="154" y="22" width="1" height="1"/>
<rect x="155" y="22" width="1" height="1"/>
<rect x="154" y="23" width="1" height="1"/>
<rect x="155" y="23" width="1" height="1"/>
<rect x="153" y="24" width="1" height="1"/>
<rect x="156" y="24" width="1" height="1"/>
<rect x="260" y="21" width="1" height="1"/>
<rect x="263" y="21" width="1" height="1"/>
<rect x="261" y="22" width="1" height="1"/>
<rect x="262" y="22" width="1" height="1"/>
<rect x="261" y="23" width="1" height="1"/>
<rect x="262" y="23" width="1" height="1"/>
<rect x="260" y="24" width="1" height="1"/>
<rect x="263" y="24" width="1" height="1"/>
<rect x="298" y="21" width="1" height="1"/>
<rect x="301" y="21" width="1" height="1"/>
<rect x="299" y="22" width="1" height="1"/>
<rect x="300" y="22" width="1" height="1"/>
<rect x="299" y="23" width="1" height="1"/>
<rect x="300" y="23" width="1" height="1"/>
<rect x="298" y="24" width="1" height="1"/>
<rect x="301" y="24" width="1" height="1"/>
<rect x="302" y="21" width="1" height="1"/>
<rect x="305" y="21" width="1" height="1"/>
<rect x="303" y="22" width="1" height="1"/>
<rect x="304" y="22" width="1" height="1"/>
<rect x="303" y="23" width="1" height="1"/>
<rect x="304" y="23" width="1" height="1"/>
<rect x="302" y="24" width="1" height="1"/>
<rect x="305" y="24" width="1" height="1"/>
<rect x="306" y="21" width="1" height="1"/>
<rect x="309" y="21" width="1" height="1"/>
<rect x="307" y="22" width="1" height="1"/>
<rect x="308" y="22" width="1" height="1"/>
<rect x="307" y="23" width="1" height="1"/>
<rect x="308" y="23" width="1" height="1"/>
<rect x="306" y="24" width="1" height="1"/>
<rect x="309" y="24" width="1" height="1"/>
<rect x="316" y="21" width="1" height="1"/>
<rect x="319" y="21" width="1" height="1"/>
<rect x="317" y="22" width="1" height="1"/>
<rect x="318" y="22" width="1" height="1"/>
<rect x="317" y="23" width="1" height="1"/>
<rect x="318" y="23" width="1" height="1"/>
<rect x="316" y="24" width="1" height="1"/>
<rect x="319" y="24" width="1" height="1"/>
<rect x="320" y="21" width="1" height="1"/>
<rect x="323" y="21" width="1" height="1"/>
<rect x="321" y="22" width="1" height="1"/>
<rect x="322" y="22" width="1" height="1"/>
<rect x="321" y="23" width="1" height="1"/>
<rect x="322" y="23" width="1" height="1"/>
<rect x="320" y="24" width="1" height="1"/>
<rect x="323" y="24" width="1" height="1"/>
<rect x="330" y="21" width="1" height="1"/>
<rect x="333" y="21" width="1" height="1"/>
<rect x="331" y="22" width="1" height="1"/>
<rect x="332" y="22" width="1" height="1"/>
<rect x="331" y="23" width="1" height="1"/>
<rect x="332" y="23" width="1" height="1"/>
<rect x="330" y="24" width="1" height="1"/>
<rect x="333" y="24" width="1" height="1"/>
<rect x="367" y="21" width="1" height="1"/>
<rect x="370" y="21" width="1" height="1"/>
<rect x="368" y="22" width="1" height="1"/>
<rect x="369" y="22" width="1" height="1"/>
<rect x="368" y="23" width="1" height="1"/>
<rect x="369" y="23" width="1" height="1"/>
<rect x="367" y="24" width="1" height="1"/>
<rect x="370" y="24" width="1" height="1"/>
<rect x="390" y="21" width="1" height="1"/>
<rect x="393" y="21" width="1" height="1"/>
<rect x="391" y="22" width="1" height="1"/>
<rect x="392" y="22" width="1" height="1"/>
<rect x="391" y="23" width="1" height="1"/>
<rect x="392" y="23" width="1" height="1"/>
<rect x="390" y="24" width="1" height="1"/>
<rect x="393" y="24" width="1" height="1"/>
<rect x="403" y="21" width="1" height="1"/>
<rect x="406" y="21" width="1" height="1"/>
<rect x="404" y="22" width="1" height="1"/>
<rect x="405" y="22" width="1" height="1"/>
<rect x="404" y="23" width="1" height="1"/>
<rect x="405" y="23" width="1" height="1"/>
<rect x="403" y="24" width="1" height="1"/>
<rect x="406" y="24" width="1" height="1"/>
<rect x="464" y="21" width="1" height="1"/>
<rect x="467" y="21" width="1" height="1"/>
<rect x="465" y="22" width="1" height="1"/>
<rect x="466" y="22" width="1" height="1"/>
<rect x="465" y="23" width="1" height="1"/>
<rect x="466" y="23" width="1" height="1"/>
<rect x="464" y="24" width="1" height="1"/>
<rect x="467" y="24" width="1" height="1"/>
<rect x="465" y="21" width="1" height="1"/>
<rect x="468" y="21" width="1" height="1"/>
<rect x="466" y="22" width="1" height="1"/>
<rect x="467" y="22" width="1" height="1"/>
<rect x="466" y="23" width="1" height="1"/>
<rect x="467" y="23" width="1" height="1"/>
<rect x="465" y="24" width="1" height="1"/>
<rect x="468" y="24" width="1" height="1"/>
<rect x="529" y="21" width="1" height="1"/>
<rect x="532" y="21" width="1" height="1"/>
<rect x="530" y="22" width="1" height="1"/>
<rect x="531" y="22" width="1" height="1"/>
<rect x="530" y="23" width="1" height="1"/>
<rect x="531" y="23" width="1" height="1"/>
<rect x="529" y="24" width="1" height="1"/>
<rect x="532" y="24" width="1" height="1"/>
<rect x="567" y="21" width="1" height="1"/>
<rect x="570" y="21" width="1" height="1"/>
<rect x="568" y="22" width="1" height="1"/>
<rect x="569" y="22" width="1" height="1"/>
<rect x="568" y="23" width="1" height="1"/>
<rect x="569" y="23" width="1" height="1"/>
<rect x="567" y="24" width="1" height="1"/>
<rect x="570" y="24" width="1" height="1"/>
<rect x="598" y="21" width="1" height="1"/>
<rect x="601" y="21" width="1" height="1"/>
<rect x="599" y="22" width="1" height="1"/>
<rect x="600" y="22" width="1" height="1"/>
<rect x="599" y="23" width="1" height="1"/>
<rect x="600" y="23" width="1" height="1"/>
<rect x="598" y="24" width="1" height="1"/>
<rect x="601" y="24" width="1" height="1"/>
<rect x="603" y="21" width="1" height="1"/>
<rect x="606" y="21" width="1" height="1"/>
<rect x="604" y="22" width="1" height="1"/>
<rect x="605" y="22" width="1" height="1"/>
<rect x="604" y="23" width="1" height="1"/>
<rect x="605" y="23" width="1" height="1"/>
<rect x="603" y="24" width="1" height="1"/>
<rect x="606" y="24" width="1" height="1"/>
<rect x="604" y="21" width="1" height="1"/>
<rect x="607" y="21" width="1" height="1"/>
<rect x="605" y="22" width="1" height="1"/>
<rect x="606" y="22" width="1" height="1"/>
<rect x="605" y="23" width="1" height="1"/>
<rect x="606" y="23" width="1" height="1"/>
<rect x="604" y="24" width="1" height="1"/>
<rect x="607" y="24" width="1" height="1"/>
<rect x="626" y="21" width="1" height="1"/>
<rect x="629" y="21" width="1" height="1"/>
<rect x="627" y="22" width="1" height="1"/>
<rect x="628" y="22" width="1" height="1"/>
<rect x="627" y="23" width="1" height="1"/>
<rect x="628" y="23" width="1" height="1"/>
<rect x="626" y="24" width="1" height="1"/>
<rect x="629" y="24" width="1" height="1"/>
<rect x="668" y="21" width="1" height="1"/>
<rect x="671" y="21" width="1" height="1"/>
<rect x="669" y="22" width="1" height="1"/>
<rect x="670" y="22" width="1" height="1"/>
<rect x="669" y="23" width="1" height="1"/>
<rect x="670" y="23" width="1" height="1"/>
<rect x="668" y="24" width="1" height="1"/>
<rect x="671" y="24" width="1" height="1"/>
<rect x="677" y="21" width="1" height="1"/>
<rect x="680" y="21" width="1" height="1"/>
<rect x="678" y="22" width="1" height="1"/>
<rect x="679" y="22" width="1" height="1"/>
<rect x="678" y="23" width="1" height="1"/>
<rect x="679" y="23" width="1" height="1"/>
<rect x="677" y="24" width="1" height="1"/>
<rect x="680" y="24" width="1" height="1"/>
<rect x="683" y="21" width="1" height="1"/>
<rect x="686" y="21" width="1" height="1"/>
<rect x="684" y="22" width="1" height="1"/>
<rect x="685" y="22" width="1" height="1"/>
<rect x="684" y="23" width="1" height="1"/>
<rect x="685" y="23" width="1" height="1"/>
<rect x="683" y="24" width="1" height="1"/>
<rect x="686" y="24" width="1" height="1"/>
<rect x="686" y="21" width="1" height="1"/>
<rect x="689" y="21" width="1" height="1"/>
<rect x="687" y="22" width="1" height="1"/>
<rect x="688" y="22" width="1" height="1"/>
<rect x="687" y="23" width="1" height="1"/>
<rect x="688" y="23" width="1" height="1"/>
<rect x="686" y="24" width="1" height="1"/>
<rect x="689" y="24" width="1" height="1"/>
<rect x="687" y="21" width="1" height="1"/>
<rect x="690" y="21" width="1" height="1"/>
<rect x="688" y="22" width="1" height="1"/>
<rect x="689" y="22" width="1" height="1"/>
<rect x="688" y="23" width="1" height="1"/>
<rect x="689" y="23" width="1" height="1"/>
<rect x="687" y="24" width="1" height="1"/>
<rect x="690" y="24" width="1" height="1"/>
<rect x="719" y="21" width="1" height="1"/>
<rect x="722" y="21" width="1" height="1"/>
<rect x="720" y="22" width="1" height="1"/>
<rect x="721" y="22" width="1" height="1"/>
<rect x="720" y="23" width="1" height="1"/>
<rect x="721" y="23" width="1" height="1"/>
<rect x="719" y="24" width="1" height="1"/>
<rect x="722" y="24" width="1" height="1"/>
<rect x="724" y="21" width="1" height="1"/>
<rect x="727" y="21" width="1" height="1"/>
<rect x="725" y="22" width="1" height="1"/>
<rect x="726" y="22" width="1" height="1"/>
<rect x="725" y="23" width="1" height="1"/>
<rect x="726" y="23" width="1" height="1"/>
<rect x="724" y="24" width="1" height="1"/>
<rect x="727" y="24" width="1" height="1"/>
<rect x="725" y="21" width="1" height="1"/>
<rect x="728" y="21" width="1" height="1"/>
<rect x="726" y="22" width="1" height="1"/>
<rect x="727" y="22" width="1" height="1"/>
<rect x="726" y="23" width="1" height="1"/>
<rect x="727" y="23" width="1" height="1"/>
<rect x="725" y="24" width="1" height="1"/>
<rect x="728" y="24" width="1" height="1"/>
<rect x="733" y="21" width="1" height="1"/>
<rect x="736" y="21" width="1" height="1"/>
<rect x="734" y="22" width="1" height="1"/>
<rect x="735" y="22" width="1" height="1"/>
<rect x="734" y="23" width="1" height="1"/>
<rect x="735" y="23" width="1" height="1"/>
<rect x="733" y="24" width="1" height="1"/>
<rect x="736" y="24" width="1" height="1"/>
</g>
<rect x="23.65" y="397.5" width="1.7" height="146.5" fill="#c2c200"/>
<polygon points="24.5,377 30.2,397.5 18.8,397.5" fill="#ffff00"/>
<rect x="428.95" y="301.8" width="1.7" height="242.2" fill="#c2c200"/>
<polygon points="429.8,281 435.5,301.8 424.1,301.8" fill="#ffff00"/>
<g shape-rendering="crispEdges">
<rect x="5" y="553" width="3" height="69" fill="#ffff00"/>
<rect x="5" y="622" width="3" height="10" fill="#00ff00"/>
<rect x="10" y="553" width="3" height="71" fill="#ffff00"/>
<rect x="10" y="624" width="3" height="6" fill="#00ff00"/>
<rect x="14" y="553" width="3" height="72" fill="#ffff00"/>
<rect x="14" y="625" width="3" height="3" fill="#00ff00"/>
<rect x="19" y="553" width="3" height="72" fill="#ffff00"/>
<rect x="24" y="553" width="3" height="69" fill="#ffff00"/>
<rect x="28" y="553" width="3" height="68" fill="#ffff00"/>
<rect x="33" y="553" width="3" height="67" fill="#ffff00"/>
<rect x="37" y="553" width="3" height="66" fill="#ffff00"/>
<rect x="42" y="553" width="3" height="65" fill="#ffff00"/>
<rect x="47" y="553" width="3" height="63" fill="#ffff00"/>
<rect x="51" y="553" width="3" height="62" fill="#ffff00"/>
<rect x="56" y="553" width="3" height="60" fill="#ffff00"/>
<rect x="61" y="553" width="3" height="58" fill="#ffff00"/>
<rect x="65" y="553" width="3" height="56" fill="#ffff00"/>
<rect x="70" y="553" width="3" height="54" fill="#ffff00"/>
<rect x="74" y="553" width="3" height="51" fill="#ffff00"/>
<rect x="79" y="553" width="3" height="47" fill="#ffff00"/>
<rect x="84" y="553" width="3" height="42" fill="#ffff00"/>
<rect x="88" y="553" width="3" height="37" fill="#ffff00"/>
<rect x="93" y="553" width="3" height="31" fill="#ffff00"/>
<rect x="98" y="549" width="3" height="4" fill="#ff0000"/>
<rect x="98" y="553" width="3" height="24" fill="#ffff00"/>
<rect x="102" y="539" width="3" height="14" fill="#ff0000"/>
<rect x="102" y="553" width="3" height="17" fill="#ffff00"/>
<rect x="107" y="531" width="3" height="22" fill="#ff0000"/>
<rect x="107" y="553" width="3" height="9" fill="#ffff00"/>
<rect x="112" y="525" width="3" height="28" fill="#ff0000"/>
<rect x="112" y="553" width="3" height="2" fill="#ffff00"/>
<rect x="116" y="521" width="3" height="27" fill="#ff0000"/>
<rect x="116" y="548" width="3" height="5" fill="#0000ff"/>
<rect x="121" y="518" width="3" height="24" fill="#ff0000"/>
<rect x="121" y="542" width="3" height="11" fill="#0000ff"/>
<rect x="125" y="517" width="3" height="20" fill="#ff0000"/>
<rect x="125" y="537" width="3" height="16" fill="#0000ff"/>
<rect x="130" y="517" width="3" height="16" fill="#ff0000"/>
<rect x="130" y="533" width="3" height="20" fill="#0000ff"/>
<rect x="135" y="518" width="3" height="12" fill="#ff0000"/>
<rect x="135" y="530" width="3" height="23" fill="#0000ff"/>
<rect x="139" y="519" width="3" height="9" fill="#ff0000"/>
<rect x="139" y="528" width="3" height="25" fill="#0000ff"/>
<rect x="144" y="519" width="3" height="8" fill="#ff0000"/>
<rect x="144" y="527" width="3" height="26" fill="#0000ff"/>
<rect x="149" y="513" width="3" height="10" fill="#ff0000"/>
<rect x="149" y="523" width="3" height="30" fill="#0000ff"/>
<rect x="153" y="510" width="3" height="11" fill="#ff0000"/>
<rect x="153" y="521" width="3" height="32" fill="#0000ff"/>
<rect x="158" y="508" width="3" height="10" fill="#ff0000"/>
<rect x="158" y="518" width="3" height="35" fill="#0000ff"/>
<rect x="163" y="507" width="3" height="10" fill="#ff0000"/>
<rect x="163" y="517" width="3" height="36" fill="#0000ff"/>
<rect x="167" y="507" width="3" height="8" fill="#ff0000"/>
<rect x="167" y="515" width="3" height="38" fill="#0000ff"/>
<rect x="172" y="508" width="3" height="6" fill="#ff0000"/>
<rect x="172" y="514" width="3" height="39" fill="#0000ff"/>
<rect x="176" y="509" width="3" height="3" fill="#ff0000"/>
<rect x="176" y="512" width="3" height="41" fill="#0000ff"/>
<rect x="181" y="512" width="3" height="41" fill="#0000ff"/>
<rect x="186" y="513" width="3" height="40" fill="#0000ff"/>
<rect x="190" y="514" width="3" height="39" fill="#0000ff"/>
<rect x="195" y="514" width="3" height="39" fill="#0000ff"/>
<rect x="200" y="515" width="3" height="38" fill="#0000ff"/>
<rect x="204" y="516" width="3" height="37" fill="#0000ff"/>
<rect x="209" y="517" width="3" height="36" fill="#0000ff"/>
<rect x="213" y="517" width="3" height="36" fill="#0000ff"/>
<rect x="218" y="518" width="3" height="35" fill="#0000ff"/>
<rect x="223" y="519" width="3" height="34" fill="#0000ff"/>
<rect x="227" y="520" width="3" height="33" fill="#0000ff"/>
<rect x="232" y="523" width="3" height="30" fill="#0000ff"/>
<rect x="237" y="527" width="3" height="26" fill="#0000ff"/>
<rect x="241" y="529" width="3" height="24" fill="#0000ff"/>
<rect x="246" y="532" width="3" height="21" fill="#0000ff"/>
<rect x="251" y="533" width="3" height="20" fill="#0000ff"/>
<rect x="255" y="525" width="3" height="6" fill="#ff0000"/>
<rect x="255" y="531" width="3" height="22" fill="#0000ff"/>
<rect x="260" y="516" width="3" height="11" fill="#ff0000"/>
<rect x="260" y="527" width="3" height="26" fill="#0000ff"/>
<rect x="264" y="508" width="3" height="15" fill="#ff0000"/>
<rect x="264" y="523" width="3" height="30" fill="#0000ff"/>
<rect x="269" y="501" width="3" height="18" fill="#ff0000"/>
<rect x="269" y="519" width="3" height="34" fill="#0000ff"/>
<rect x="274" y="496" width="3" height="19" fill="#ff0000"/>
<rect x="274" y="515" width="3" height="38" fill="#0000ff"/>
<rect x="278" y="489" width="3" height="21" fill="#ff0000"/>
<rect x="278" y="510" width="3" height="43" fill="#0000ff"/>
<rect x="283" y="479" width="3" height="26" fill="#ff0000"/>
<rect x="283" y="505" width="3" height="48" fill="#0000ff"/>
<rect x="288" y="470" width="3" height="29" fill="#ff0000"/>
<rect x="288" y="499" width="3" height="54" fill="#0000ff"/>
<rect x="292" y="459" width="3" height="33" fill="#ff0000"/>
<rect x="292" y="492" width="3" height="61" fill="#0000ff"/>
<rect x="297" y="449" width="3" height="36" fill="#ff0000"/>
<rect x="297" y="485" width="3" height="68" fill="#0000ff"/>
<rect x="302" y="442" width="3" height="35" fill="#ff0000"/>
<rect x="302" y="477" width="3" height="76" fill="#0000ff"/>
<rect x="306" y="444" width="3" height="26" fill="#ff0000"/>
<rect x="306" y="470" width="3" height="83" fill="#0000ff"/>
<rect x="311" y="443" width="3" height="22" fill="#ff0000"/>
<rect x="311" y="465" width="3" height="88" fill="#0000ff"/>
<rect x="315" y="441" width="3" height="19" fill="#ff0000"/>
<rect x="315" y="460" width="3" height="93" fill="#0000ff"/>
<rect x="320" y="443" width="3" height="14" fill="#ff0000"/>
<rect x="320" y="457" width="3" height="96" fill="#0000ff"/>
<rect x="325" y="445" width="3" height="9" fill="#ff0000"/>
<rect x="325" y="454" width="3" height="99" fill="#0000ff"/>
<rect x="329" y="447" width="3" height="5" fill="#ff0000"/>
<rect x="329" y="452" width="3" height="101" fill="#0000ff"/>
<rect x="334" y="453" width="3" height="100" fill="#0000ff"/>
<rect x="339" y="456" width="3" height="97" fill="#0000ff"/>
<rect x="343" y="462" width="3" height="91" fill="#0000ff"/>
<rect x="348" y="468" width="3" height="85" fill="#0000ff"/>
<rect x="352" y="475" width="3" height="78" fill="#0000ff"/>
<rect x="357" y="484" width="3" height="69" fill="#0000ff"/>
<rect x="362" y="494" width="3" height="59" fill="#0000ff"/>
<rect x="366" y="507" width="3" height="46" fill="#0000ff"/>
<rect x="371" y="518" width="3" height="35" fill="#0000ff"/>
<rect x="371" y="553" width="3" height="7" fill="#00ff00"/>
<rect x="376" y="528" width="3" height="25" fill="#0000ff"/>
<rect x="376" y="553" width="3" height="19" fill="#00ff00"/>
<rect x="380" y="540" width="3" height="13" fill="#0000ff"/>
<rect x="380" y="553" width="3" height="29" fill="#00ff00"/>
<rect x="385" y="549" width="3" height="4" fill="#0000ff"/>
<rect x="385" y="553" width="3" height="36" fill="#00ff00"/>
<rect x="390" y="553" width="3" height="4" fill="#ffff00"/>
<rect x="390" y="557" width="3" height="31" fill="#00ff00"/>
<rect x="394" y="553" width="3" height="12" fill="#ffff00"/>
<rect x="394" y="565" width="3" height="27" fill="#00ff00"/>
<rect x="399" y="553" width="3" height="19" fill="#ffff00"/>
<rect x="399" y="572" width="3" height="29" fill="#00ff00"/>
<rect x="403" y="553" width="3" height="26" fill="#ffff00"/>
<rect x="403" y="579" width="3" height="27" fill="#00ff00"/>
<rect x="408" y="553" width="3" height="32" fill="#ffff00"/>
<rect x="408" y="585" width="3" height="27" fill="#00ff00"/>
<rect x="413" y="553" width="3" height="39" fill="#ffff00"/>
<rect x="413" y="592" width="3" height="26" fill="#00ff00"/>
<rect x="417" y="553" width="3" height="44" fill="#ffff00"/>
<rect x="417" y="597" width="3" height="22" fill="#00ff00"/>
<rect x="422" y="553" width="3" height="48" fill="#ffff00"/>
<rect x="422" y="601" width="3" height="16" fill="#00ff00"/>
<rect x="427" y="553" width="3" height="49" fill="#ffff00"/>
<rect x="431" y="553" width="3" height="48" fill="#ffff00"/>
<rect x="436" y="553" width="3" height="48" fill="#ffff00"/>
<rect x="441" y="553" width="3" height="47" fill="#ffff00"/>
<rect x="445" y="553" width="3" height="45" fill="#ffff00"/>
<rect x="450" y="553" width="3" height="44" fill="#ffff00"/>
<rect x="454" y="553" width="3" height="44" fill="#ffff00"/>
<rect x="459" y="553" width="3" height="43" fill="#ffff00"/>
<rect x="464" y="553" width="3" height="43" fill="#ffff00"/>
<rect x="468" y="553" width="3" height="40" fill="#ffff00"/>
<rect x="473" y="553" width="3" height="38" fill="#ffff00"/>
<rect x="478" y="553" width="3" height="35" fill="#ffff00"/>
<rect x="482" y="553" width="3" height="31" fill="#ffff00"/>
<rect x="487" y="553" width="3" height="28" fill="#ffff00"/>
<rect x="491" y="553" width="3" height="24" fill="#ffff00"/>
<rect x="496" y="553" width="3" height="21" fill="#ffff00"/>
<rect x="501" y="553" width="3" height="17" fill="#ffff00"/>
<rect x="505" y="552" width="3" height="1" fill="#ff0000"/>
<rect x="505" y="553" width="3" height="14" fill="#ffff00"/>
<rect x="510" y="543" width="3" height="10" fill="#ff0000"/>
<rect x="510" y="553" width="3" height="10" fill="#ffff00"/>
<rect x="515" y="537" width="3" height="16" fill="#ff0000"/>
<rect x="515" y="553" width="3" height="5" fill="#ffff00"/>
<rect x="519" y="531" width="3" height="22" fill="#ff0000"/>
<rect x="524" y="525" width="3" height="22" fill="#ff0000"/>
<rect x="524" y="547" width="3" height="6" fill="#0000ff"/>
<rect x="529" y="520" width="3" height="21" fill="#ff0000"/>
<rect x="529" y="541" width="3" height="12" fill="#0000ff"/>
<rect x="533" y="515" width="3" height="20" fill="#ff0000"/>
<rect x="533" y="535" width="3" height="18" fill="#0000ff"/>
<rect x="538" y="514" width="3" height="18" fill="#ff0000"/>
<rect x="538" y="532" width="3" height="21" fill="#0000ff"/>
<rect x="542" y="515" width="3" height="14" fill="#ff0000"/>
<rect x="542" y="529" width="3" height="24" fill="#0000ff"/>
<rect x="547" y="517" width="3" height="9" fill="#ff0000"/>
<rect x="547" y="526" width="3" height="27" fill="#0000ff"/>
<rect x="552" y="521" width="3" height="4" fill="#ff0000"/>
<rect x="552" y="525" width="3" height="28" fill="#0000ff"/>
<rect x="556" y="523" width="3" height="1" fill="#ff0000"/>
<rect x="556" y="524" width="3" height="29" fill="#0000ff"/>
<rect x="561" y="523" width="3" height="1" fill="#ff0000"/>
<rect x="561" y="524" width="3" height="29" fill="#0000ff"/>
<rect x="566" y="524" width="3" height="29" fill="#0000ff"/>
<rect x="570" y="525" width="3" height="28" fill="#0000ff"/>
<rect x="575" y="527" width="3" height="26" fill="#0000ff"/>
<rect x="579" y="530" width="3" height="23" fill="#0000ff"/>
<rect x="584" y="534" width="3" height="19" fill="#0000ff"/>
<rect x="589" y="538" width="3" height="15" fill="#0000ff"/>
<rect x="589" y="553" width="3" height="2" fill="#00ff00"/>
<rect x="593" y="543" width="3" height="10" fill="#0000ff"/>
<rect x="593" y="553" width="3" height="11" fill="#00ff00"/>
<rect x="598" y="549" width="3" height="4" fill="#0000ff"/>
<rect x="598" y="553" width="3" height="15" fill="#00ff00"/>
<rect x="603" y="552" width="3" height="1" fill="#0000ff"/>
<rect x="603" y="553" width="3" height="17" fill="#00ff00"/>
<rect x="607" y="553" width="3" height="4" fill="#ffff00"/>
<rect x="607" y="557" width="3" height="16" fill="#00ff00"/>
<rect x="612" y="553" width="3" height="11" fill="#ffff00"/>
<rect x="612" y="564" width="3" height="12" fill="#00ff00"/>
<rect x="617" y="553" width="3" height="16" fill="#ffff00"/>
<rect x="617" y="569" width="3" height="11" fill="#00ff00"/>
<rect x="621" y="553" width="3" height="17" fill="#ffff00"/>
<rect x="621" y="570" width="3" height="18" fill="#00ff00"/>
<rect x="626" y="553" width="3" height="23" fill="#ffff00"/>
<rect x="626" y="576" width="3" height="20" fill="#00ff00"/>
<rect x="630" y="553" width="3" height="27" fill="#ffff00"/>
<rect x="630" y="580" width="3" height="20" fill="#00ff00"/>
<rect x="635" y="553" width="3" height="31" fill="#ffff00"/>
<rect x="635" y="584" width="3" height="15" fill="#00ff00"/>
<rect x="640" y="553" width="3" height="33" fill="#ffff00"/>
<rect x="640" y="586" width="3" height="8" fill="#00ff00"/>
<rect x="644" y="553" width="3" height="34" fill="#ffff00"/>
<rect x="644" y="587" width="3" height="3" fill="#00ff00"/>
<rect x="649" y="553" width="3" height="35" fill="#ffff00"/>
<rect x="649" y="588" width="3" height="1" fill="#00ff00"/>
<rect x="654" y="553" width="3" height="34" fill="#ffff00"/>
<rect x="658" y="553" width="3" height="34" fill="#ffff00"/>
<rect x="663" y="553" width="3" height="34" fill="#ffff00"/>
<rect x="668" y="553" width="3" height="34" fill="#ffff00"/>
<rect x="672" y="553" width="3" height="37" fill="#ffff00"/>
<rect x="672" y="590" width="3" height="6" fill="#00ff00"/>
<rect x="677" y="553" width="3" height="40" fill="#ffff00"/>
<rect x="677" y="593" width="3" height="11" fill="#00ff00"/>
<rect x="681" y="553" width="3" height="43" fill="#ffff00"/>
<rect x="681" y="596" width="3" height="14" fill="#00ff00"/>
<rect x="686" y="553" width="3" height="47" fill="#ffff00"/>
<rect x="686" y="600" width="3" height="12" fill="#00ff00"/>
<rect x="691" y="553" width="3" height="51" fill="#ffff00"/>
<rect x="691" y="604" width="3" height="18" fill="#00ff00"/>
<rect x="695" y="553" width="3" height="55" fill="#ffff00"/>
<rect x="695" y="608" width="3" height="18" fill="#00ff00"/>
<rect x="700" y="553" width="3" height="59" fill="#ffff00"/>
<rect x="700" y="612" width="3" height="14" fill="#00ff00"/>
<rect x="705" y="553" width="3" height="61" fill="#ffff00"/>
<rect x="705" y="614" width="3" height="5" fill="#00ff00"/>
<rect x="709" y="553" width="3" height="61" fill="#ffff00"/>
<rect x="714" y="553" width="3" height="59" fill="#ffff00"/>
<rect x="718" y="553" width="3" height="58" fill="#ffff00"/>
<rect x="723" y="553" width="3" height="58" fill="#ffff00"/>
<rect x="728" y="553" width="3" height="57" fill="#ffff00"/>
<rect x="732" y="553" width="3" height="57" fill="#ffff00"/>
<rect x="737" y="553" width="3" height="57" fill="#ffff00"/>
</g>
<defs>
<radialGradient id="sm" cx="42%" cy="35%" r="70%"><stop offset="0" stop-color="#fffbe0"/><stop offset="0.55" stop-color="#f6e27a"/><stop offset="1" stop-color="#b98f3a"/></radialGradient>
<radialGradient id="bg" cx="45%" cy="40%" r="70%"><stop offset="0" stop-color="#ffffff"/><stop offset="0.75" stop-color="#f4f4ee"/><stop offset="1" stop-color="#e8e060"/></radialGradient>
</defs>
<g transform="translate(24.6,552.8)"><path d="M-3.6 -9.6L3.4 -9.6L1.7 -5.6L-1.9 -5.6Z" fill="#f0e400"/><path d="M-1.6 -8.6L1.4 -8.6L0.8 -6.4L-1 -6.4Z" fill="#ffffff"/><ellipse cx="0" cy="0.1" rx="6.3" ry="5.5" fill="url(#bg)" stroke="#e9dd00" stroke-width="1.3"/><text x="0" y="3.3" font-family="Liberation Sans, sans-serif" font-size="9" font-weight="bold" fill="#b81818" text-anchor="middle">$</text></g>
<text x="28.5" y="556" font-family="Liberation Sans, Noto Sans CJK SC, sans-serif" font-size="12" fill="#ff00ff" stroke="#ff00ff" stroke-width="0.15" textLength="21.5" lengthAdjust="spacingAndGlyphs">抄底</text>
<g transform="translate(432.7,552.8)"><path d="M-3.6 -9.6L3.4 -9.6L1.7 -5.6L-1.9 -5.6Z" fill="#f0e400"/><path d="M-1.6 -8.6L1.4 -8.6L0.8 -6.4L-1 -6.4Z" fill="#ffffff"/><ellipse cx="0" cy="0.1" rx="6.3" ry="5.5" fill="url(#bg)" stroke="#e9dd00" stroke-width="1.3"/><text x="0" y="3.3" font-family="Liberation Sans, sans-serif" font-size="9" font-weight="bold" fill="#b81818" text-anchor="middle">$</text></g>
<text x="436.59999999999997" y="556" font-family="Liberation Sans, Noto Sans CJK SC, sans-serif" font-size="12" fill="#ff00ff" stroke="#ff00ff" stroke-width="0.15" textLength="21.5" lengthAdjust="spacingAndGlyphs">抄底</text>
<g transform="translate(659.8,552.8)"><path d="M-3.6 -9.6L3.4 -9.6L1.7 -5.6L-1.9 -5.6Z" fill="#f0e400"/><path d="M-1.6 -8.6L1.4 -8.6L0.8 -6.4L-1 -6.4Z" fill="#ffffff"/><ellipse cx="0" cy="0.1" rx="6.3" ry="5.5" fill="url(#bg)" stroke="#e9dd00" stroke-width="1.3"/><text x="0" y="3.3" font-family="Liberation Sans, sans-serif" font-size="9" font-weight="bold" fill="#b81818" text-anchor="middle">$</text></g>
<text x="663.6999999999999" y="556" font-family="Liberation Sans, Noto Sans CJK SC, sans-serif" font-size="12" fill="#ff00ff" stroke="#ff00ff" stroke-width="0.15" textLength="21.5" lengthAdjust="spacingAndGlyphs">抄底</text>
<g transform="translate(716,552.8)"><path d="M-3.6 -9.6L3.4 -9.6L1.7 -5.6L-1.9 -5.6Z" fill="#f0e400"/><path d="M-1.6 -8.6L1.4 -8.6L0.8 -6.4L-1 -6.4Z" fill="#ffffff"/><ellipse cx="0" cy="0.1" rx="6.3" ry="5.5" fill="url(#bg)" stroke="#e9dd00" stroke-width="1.3"/><text x="0" y="3.3" font-family="Liberation Sans, sans-serif" font-size="9" font-weight="bold" fill="#b81818" text-anchor="middle">$</text></g>
<text x="719.9" y="556" font-family="Liberation Sans, Noto Sans CJK SC, sans-serif" font-size="12" fill="#ff00ff" stroke="#ff00ff" stroke-width="0.15" textLength="21.5" lengthAdjust="spacingAndGlyphs">抄底</text>
<g transform="translate(25,635.2)"><circle r="7.6" fill="url(#sm)" stroke="#8a8378" stroke-width="1"/><ellipse cx="-2.6" cy="-2" rx="1" ry="1.7" fill="#4a3a1a"/><ellipse cx="2.6" cy="-2" rx="1" ry="1.7" fill="#4a3a1a"/><path d="M-4.3 1.6Q0 6.6 4.3 1.6" fill="none" stroke="#4a3a1a" stroke-width="1.3" stroke-linecap="round"/></g>
<g transform="translate(256,527)"><circle r="7.6" fill="url(#sm)" stroke="#8a8378" stroke-width="1"/><ellipse cx="-2.6" cy="-2" rx="1" ry="1.7" fill="#4a3a1a"/><ellipse cx="2.6" cy="-2" rx="1" ry="1.7" fill="#4a3a1a"/><path d="M-4.3 1.6Q0 6.6 4.3 1.6" fill="none" stroke="#4a3a1a" stroke-width="1.3" stroke-linecap="round"/></g>
<g transform="translate(432.8,609.8)"><circle r="7.6" fill="url(#sm)" stroke="#8a8378" stroke-width="1"/><ellipse cx="-2.6" cy="-2" rx="1" ry="1.7" fill="#4a3a1a"/><ellipse cx="2.6" cy="-2" rx="1" ry="1.7" fill="#4a3a1a"/><path d="M-4.3 1.6Q0 6.6 4.3 1.6" fill="none" stroke="#4a3a1a" stroke-width="1.3" stroke-linecap="round"/></g>
<g transform="translate(659.3,593.1)"><circle r="7.6" fill="url(#sm)" stroke="#8a8378" stroke-width="1"/><ellipse cx="-2.6" cy="-2" rx="1" ry="1.7" fill="#4a3a1a"/><ellipse cx="2.6" cy="-2" rx="1" ry="1.7" fill="#4a3a1a"/><path d="M-4.3 1.6Q0 6.6 4.3 1.6" fill="none" stroke="#4a3a1a" stroke-width="1.3" stroke-linecap="round"/></g>
<g transform="translate(715.7,622.3)"><circle r="7.6" fill="url(#sm)" stroke="#8a8378" stroke-width="1"/><ellipse cx="-2.6" cy="-2" rx="1" ry="1.7" fill="#4a3a1a"/><ellipse cx="2.6" cy="-2" rx="1" ry="1.7" fill="#4a3a1a"/><path d="M-4.3 1.6Q0 6.6 4.3 1.6" fill="none" stroke="#4a3a1a" stroke-width="1.3" stroke-linecap="round"/></g>
<polyline points="25.1,621.9 37.6,619.4 50.1,615.6 62.7,610.6 72.7,606.8 80.2,600.6 87.7,593.0 95.3,583.0 102.8,571.7 110.3,559.2 117.8,547.9 125.3,537.9 132.9,531.6 140.4,527.9 145.4,526.6 152.9,521.6 160.4,517.8 168.0,515.3 175.5,512.8 179.2,512.1" fill="none" stroke="#ff00ff" stroke-width="2.2" stroke-linejoin="round"/>
<polyline points="25.1,620.6 35.1,616.9 45.1,613.9 52.6,609.3 60.2,601.8 65.2,600.6 71.4,599.3 77.7,586.8 85.2,573.0 92.8,559.2 100.3,546.7 105.3,535.4 110.3,527.9 116.6,521.1 125.3,516.6 132.9,516.6 139.1,519.1 145.4,519.1 150.4,512.8 157.9,507.8 168.0,507.1 175.5,508.6 179.2,509.1" fill="none" stroke="#ff0000" stroke-width="1.6" stroke-linejoin="round"/>
<polyline points="256.5,531.6 265.2,524.0 275.3,515.3 285.3,504.0 295.3,490.2 305.3,472.6 315.4,461.4 325.4,453.8 331.7,452.1" fill="none" stroke="#ff00ff" stroke-width="2.2" stroke-linejoin="round"/>
<polyline points="256.5,525.3 262.7,512.8 269.0,502.7 276.5,495.2 282.8,482.7 290.3,467.6 296.6,451.3 302.8,442.1 310.4,444.6 316.6,440.6 324.1,443.8 331.7,447.6" fill="none" stroke="#ff0000" stroke-width="1.6" stroke-linejoin="round"/>
<polyline points="432.2,601.4 440.8,600.1 448.9,597.3 460.0,596.5 465.3,595.6 475.3,590.5 485.4,583.0 495.4,575.5 505.4,568.0 515.5,559.2 525.5,546.7 535.5,534.1 541.3,530.4 547.5,526.6 555.1,524.1 563.8,523.4" fill="none" stroke="#ff00ff" stroke-width="2.2" stroke-linejoin="round"/>
<polyline points="432.2,600.6 437.5,595.7 444.0,593.3 447.2,593.3 450.5,596.5 457.8,594.3 465.3,591.8 472.8,585.5 480.4,575.5 487.9,564.2 494.1,559.2 501.7,558.0 507.9,550.4 512.9,540.4 520.5,531.6 528.0,521.6 534.3,515.3 541.3,513.6 547.5,516.6 553.8,521.6 558.8,522.9 563.8,522.9" fill="none" stroke="#ff0000" stroke-width="1.6" stroke-linejoin="round"/>
<polyline points="659.3,586.6 665.0,586.6" fill="none" stroke="#ff00ff" stroke-width="2.2" stroke-linejoin="round"/>
<polyline points="659.3,586.4 660.3,586.4" fill="none" stroke="#ff0000" stroke-width="1.6" stroke-linejoin="round"/>
<polyline points="715.2,611.7 739.1,609.6" fill="none" stroke="#ff00ff" stroke-width="2.2" stroke-linejoin="round"/>
<polyline points="715.2,610.0 724.9,607.5 739.1,608.7" fill="none" stroke="#ff0000" stroke-width="1.6" stroke-linejoin="round"/>
<path d="M181.6 499.7h2.8v5.2h3.1l-4.5 5.4l-4.5 -5.4h3.1z" fill="#10d620"/>
<path d="M334.6 435.0h2.8v5.2h3.1l-4.5 5.4l-4.5 -5.4h3.1z" fill="#10d620"/>
<path d="M566.2 512.7h2.8v5.2h3.1l-4.5 5.4l-4.5 -5.4h3.1z" fill="#10d620"/>
<path d="M668.3000000000001 582.0h2.8v5.2h3.1l-4.5 5.4l-4.5 -5.4h3.1z" fill="#10d620"/>
<text x="4.5" y="15.2" font-family="Liberation Sans, Noto Sans CJK SC, sans-serif" font-size="11.5" fill="#ffffff" stroke="#ffffff" stroke-width="0.12" textLength="118.5" lengthAdjust="spacingAndGlyphs" >兄弟科技(日线.前复权)</text>
<text x="127.5" y="15" font-family="Liberation Sans, Noto Sans CJK SC, sans-serif" font-size="12" fill="#ffffff" stroke="#ffffff" stroke-width="0.12" textLength="59.5" lengthAdjust="spacingAndGlyphs" >MA5: 21.13</text>
<g stroke="#6ce2e8" stroke-width="1.2" fill="none" stroke-linecap="square">
<path d="M191.2 4V16M188.89999999999998 13L191.2 16L193.5 13"/>
</g>
<text x="203.8" y="15" font-family="Liberation Sans, Noto Sans CJK SC, sans-serif" font-size="12" fill="#ffff00" stroke="#ffff00" stroke-width="0.25" textLength="66" lengthAdjust="spacingAndGlyphs" >MA10: 21.57</text>
<g stroke="#ff0000" stroke-width="1.2" fill="none" stroke-linecap="square">
<path d="M274.3 4V16M272.0 7L274.3 4L276.6 7"/>
</g>
<text x="286.6" y="15" font-family="Liberation Sans, Noto Sans CJK SC, sans-serif" font-size="12" fill="#ff00ff" stroke="#ff00ff" stroke-width="0.25" textLength="66" lengthAdjust="spacingAndGlyphs" >MA20: 22.50</text>
<g stroke="#6ce2e8" stroke-width="1.2" fill="none" stroke-linecap="square">
<path d="M357.4 4V16M355.09999999999997 13L357.4 16L359.7 13"/>
</g>
<text x="370.3" y="15" font-family="Liberation Sans, Noto Sans CJK SC, sans-serif" font-size="12" fill="#00ff00" stroke="#00ff00" stroke-width="0.25" textLength="65.5" lengthAdjust="spacingAndGlyphs" >MA60: 26.06</text>
<g stroke="#6ce2e8" stroke-width="1.2" fill="none" stroke-linecap="square">
<path d="M440.5 4V16M438.2 13L440.5 16L442.8 13"/>
</g>
<text x="331" y="34" font-family="Liberation Sans, Noto Sans CJK SC, sans-serif" font-size="12" fill="#e8e8e8" stroke="#e8e8e8" stroke-width="0.12" textLength="29.5" lengthAdjust="spacingAndGlyphs" >37.05</text>
<path d="M317 23.5L328.5 27.2M317 23.5l3.2 -0.8M317 23.5l2 2.6" stroke="#e8e8e8" stroke-width="1" fill="none"/>
<text x="55.5" y="397.3" font-family="Liberation Sans, Noto Sans CJK SC, sans-serif" font-size="12" fill="#e8e8e8" stroke="#e8e8e8" stroke-width="0.12" textLength="29" lengthAdjust="spacingAndGlyphs" >18.88</text>
<path d="M43.5 392.8H54.5M43.5 392.8l3 -2.6M43.5 392.8l3 2.6" stroke="#e8e8e8" stroke-width="1" fill="none"/>
<text x="4.2" y="425" font-family="Liberation Sans, Noto Sans CJK SC, sans-serif" font-size="12" fill="#ffffff" stroke="#ffffff" stroke-width="0.12" textLength="57" lengthAdjust="spacingAndGlyphs" >組合MACD</text>
<text x="97" y="425" font-family="Liberation Sans, Noto Sans CJK SC, sans-serif" font-size="12" fill="#ff0000" stroke="#ff0000" stroke-width="0.25" textLength="66" lengthAdjust="spacingAndGlyphs" >强1:-127.80</text>
<g stroke="#ff0000" stroke-width="1.2" fill="none" stroke-linecap="square">
<path d="M168.4 414V426M166.1 417L168.4 414L170.70000000000002 417"/>
</g>
<text x="180" y="425" font-family="Liberation Sans, Noto Sans CJK SC, sans-serif" font-size="12" fill="#ff00ff" stroke="#ff00ff" stroke-width="0.25" textLength="66.5" lengthAdjust="spacingAndGlyphs" >强2:-131.14</text>
<g stroke="#ff0000" stroke-width="1.2" fill="none" stroke-linecap="square">
<path d="M251.5 414V426M249.2 417L251.5 414L253.8 417"/>
</g>
</svg>
</body></html>
